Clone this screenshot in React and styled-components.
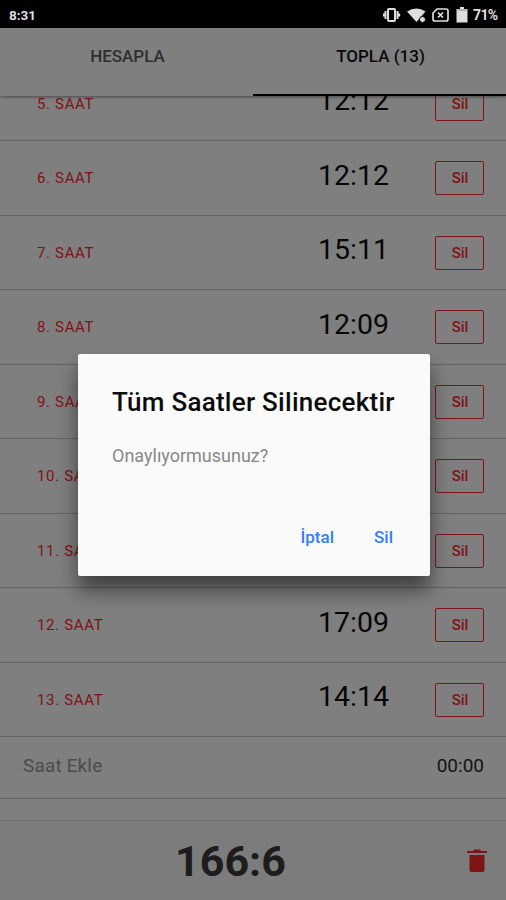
import styled, { createGlobalStyle } from 'styled-components';

const colors = {
   white: '#ffffff',
   footer: '#f9f9f9',
   border: '#c8c8c8',
   danger: '#ff282e',
   primary: '#327eff',
   text: '#0c0c0c',
   muted: '#999999',
   status: '#dedede',
};

const GlobalStyle = createGlobalStyle`
   * {
      box-sizing: border-box;
   }

   body {
      margin: 0;
      font-family: Roboto, 'Liberation Sans', sans-serif;
      background-color: ${colors.white};
   }
`;

const PhoneStyle = styled.div`
   width: 506px;
   height: 900px;
   display: flex;
   flex-direction: column;
   overflow: hidden;
`;

const StatusBarStyle = styled.header`
   flex: none;
   height: 28px;
   padding: 1px 8px 0 9px;
   display: flex;
   align-items: center;
   justify-content: space-between;
   background-color: #000;
   color: ${colors.status};
   font-size: 13.5px;
   font-weight: bold;
`;

const StatusIconsStyle = styled.div`
   display: flex;
   align-items: center;

   svg {
      display: block;
   }
`;

const BatteryTextStyle = styled.span`
   width: 25px;
   margin-left: 4px;
   font-size: 14px;
   letter-spacing: -0.6px;
`;

const ScreenStyle = styled.main`
   position: relative;
   height: 872px;
   display: flex;
   flex-direction: column;
   background-color: ${colors.white};
`;

const TabsStyle = styled.nav`
   flex: none;
   height: 68px;
   display: grid;
   grid-template-columns: 1fr 1fr;
   background-color: ${colors.white};
   box-shadow: 0 1px 3px rgba(0, 0, 0, 0.45);
   z-index: 1;
`;

const TabStyle = styled.button`
   border: 0;
   border-bottom: 2px solid ${(props) => (props.$active ? '#000' : 'transparent')};
   padding: 0 0 10px 2px;
   background: none;
   font-family: inherit;
   font-size: 17px;
   font-weight: 500;
   color: ${(props) => (props.$active ? '#111' : '#5c5c5c')};
`;

const ListStyle = styled.ul`
   flex: none;
   margin: 0;
   margin-top: -29.5px;
   padding: 0;
   list-style: none;
`;

const RowStyle = styled.li`
   height: 74.5px;
   padding: 0 22px 0 37px;
   display: grid;
   grid-template-columns: 1fr auto 49px;
   align-items: center;
   border-bottom: 1px solid ${colors.border};
`;

const RowLabelStyle = styled.span`
   padding-top: 1px;
   font-size: 15px;
   letter-spacing: 0.65px;
   color: ${colors.danger};
`;

const RowTimeStyle = styled.span`
   width: 117px;
   padding-bottom: 5px;
   font-size: 28.5px;
   color: ${colors.text};
`;

const DeleteButtonStyle = styled.button`
   height: 34px;
   margin-top: 1px;
   padding: 0 0 0 1px;
   border: 1px solid ${colors.danger};
   border-radius: 2px;
   background: none;
   font-family: inherit;
   font-size: 15px;
   font-weight: 500;
   color: ${colors.danger};
`;

const AddRowStyle = styled.li`
   height: 62px;
   padding: 0 22px 5px 23px;
   display: flex;
   align-items: center;
   justify-content: space-between;
   border-bottom: 1px solid ${colors.border};
   font-size: 19px;
   color: #2a2a2a;
`;

const PlaceholderStyle = styled.span`
   letter-spacing: 0.15px;
   color: ${colors.muted};
`;

const FooterStyle = styled.footer`
   flex: none;
   height: 80px;
   margin-top: auto;
   padding: 0 19px 0 45px;
   display: grid;
   grid-template-columns: 1fr 20px;
   align-items: center;
   border-top: 1px solid #e0e0e0;
   background-color: ${colors.footer};
`;

const TotalStyle = styled.strong`
   padding-right: 51px;
   text-align: center;
   font-size: 43px;
   font-weight: bold;
   color: #3a3a3a;
`;

const BackdropStyle = styled.div`
   position: absolute;
   inset: 0;
   z-index: 2;
   padding: 1px 0 0 2px;
   display: flex;
   align-items: center;
   justify-content: center;
   background-color: rgba(0, 0, 0, 0.5);
`;

const DialogStyle = styled.section`
   width: 352px;
   height: 222px;
   padding: 32px 26px 19px 34px;
   display: flex;
   flex-direction: column;
   border-radius: 2px;
   background-color: #fafafa;
   box-shadow: 0 14px 20px rgba(0, 0, 0, 0.5);
`;

const DialogTitleStyle = styled.h2`
   margin: 0;
   font-size: 26px;
   font-weight: 500;
   line-height: 32px;
   letter-spacing: 0.26px;
   white-space: nowrap;
   color: ${colors.text};
`;

const DialogTextStyle = styled.p`
   margin: 26px 0 0;
   font-size: 18px;
   line-height: 24px;
   color: #888;
`;

const DialogActionsStyle = styled.div`
   margin-top: auto;
   display: flex;
   justify-content: flex-end;
   gap: 18px;
`;

const DialogButtonStyle = styled.button`
   height: 40px;
   padding: 0 11px;
   border: 0;
   background: none;
   font-family: inherit;
   font-size: 17px;
   font-weight: 500;
   color: ${colors.primary};
`;

const rows = [
   { id: 5, time: '12:12' },
   { id: 6, time: '12:12' },
   { id: 7, time: '15:11' },
   { id: 8, time: '12:09' },
   { id: 9, time: '11:10' },
   { id: 10, time: '12:12' },
   { id: 11, time: '13:08' },
   { id: 12, time: '17:09' },
   { id: 13, time: '14:14' },
];

function StatusIcons() {
   return (
      <svg width="86" height="20" viewBox="0 0 86 20" fill="none" stroke={colors.status}>
         <rect x="5" y="4" width="7" height="12" rx="1" strokeWidth="2" />
         <path d="M2.500 6v8M14.500 6v8M.8 8.500v3M16.200 8.500v3" strokeWidth="2" />
         <path d="M24 6.500q9.500-6 18.500 0L33.500 17z" fill={colors.status} stroke="none" />
         <circle cx="39.500" cy="14.500" r="3" fill={colors.status} stroke="#000" />
         <path d="M54 4h9q2 0 2 2v8q0 2-2 2H52q-2 0-2-2V8z" strokeWidth="1.700" />
         <path d="M55 7.500l5 5M60 7.500l-5 5" strokeWidth="1.700" />
         <path d="M77 2h4v2h3.500v13.500h-11V4H77z" fill={colors.status} stroke="none" />
         <path d="M74.500 5h9" stroke="#888" />
      </svg>
   );
}

function TrashIcon() {
   return (
      <svg width="20" height="24" viewBox="0 0 20 24" fill={colors.danger}>
         <path d="M0 2h6l1-1.500h6l1 1.500h6v2H0zM2.500 6h15v15q0 2-2 2h-11q-2 0-2-2z" />
      </svg>
   );
}

function App() {
   return (
      <>
         <GlobalStyle />
         <PhoneStyle>
            <StatusBarStyle>
               <span>8:31</span>
               <StatusIconsStyle>
                  <StatusIcons />
                  <BatteryTextStyle>71%</BatteryTextStyle>
               </StatusIconsStyle>
            </StatusBarStyle>
            <ScreenStyle>
               <TabsStyle>
                  <TabStyle>HESAPLA</TabStyle>
                  <TabStyle $active>TOPLA (13)</TabStyle>
               </TabsStyle>
               <ListStyle>
                  {rows.map((row) => (
                     <RowStyle key={row.id}>
                        <RowLabelStyle>{row.id}. SAAT</RowLabelStyle>
                        <RowTimeStyle>{row.time}</RowTimeStyle>
                        <DeleteButtonStyle>Sil</DeleteButtonStyle>
                     </RowStyle>
                  ))}
                  <AddRowStyle>
                     <PlaceholderStyle>Saat Ekle</PlaceholderStyle>
                     <span>00:00</span>
                  </AddRowStyle>
               </ListStyle>
               <FooterStyle>
                  <TotalStyle>166:6</TotalStyle>
                  <TrashIcon />
               </FooterStyle>
               <BackdropStyle>
                  <DialogStyle>
                     <DialogTitleStyle>Tüm Saatler Silinecektir</DialogTitleStyle>
                     <DialogTextStyle>Onaylıyormusunuz?</DialogTextStyle>
                     <DialogActionsStyle>
                        <DialogButtonStyle>İptal</DialogButtonStyle>
                        <DialogButtonStyle>Sil</DialogButtonStyle>
                     </DialogActionsStyle>
                  </DialogStyle>
               </BackdropStyle>
            </ScreenStyle>
         </PhoneStyle>
      </>
   );
}

export default App;
